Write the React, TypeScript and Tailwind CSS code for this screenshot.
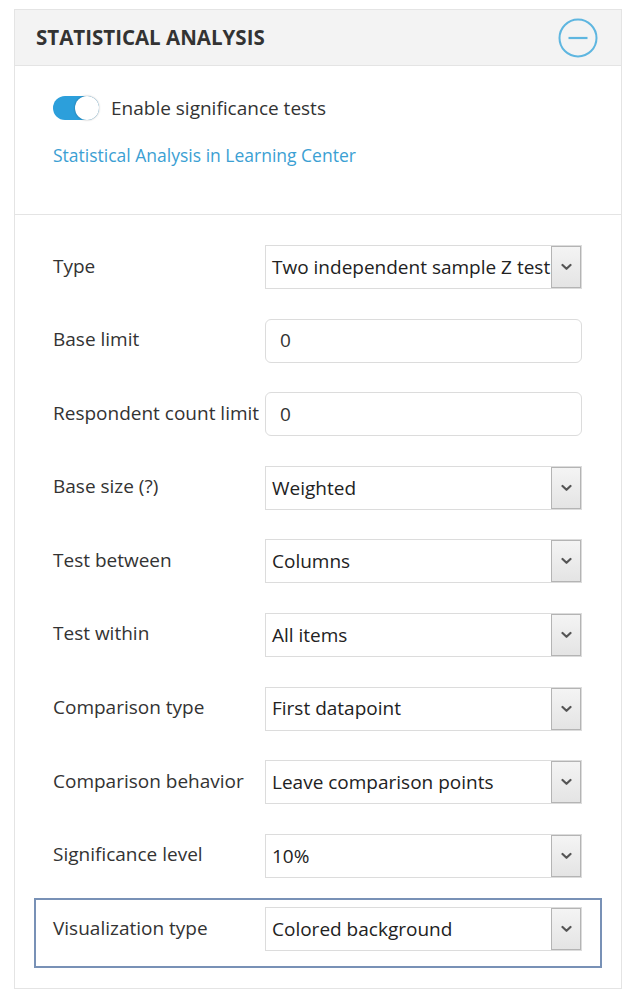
import React, { useState } from 'react';

const font = { fontFamily: '"Open Sans", "Noto Sans", sans-serif' };

const Chevron: React.FC = () => (
  <svg className="h-[8px] w-[11px]" viewBox="0 0 11 8" fill="none">
    <path d="M1.5 2l4 3.8 4-3.8" stroke="#555" strokeWidth={2.2} strokeLinecap="round" strokeLinejoin="round" />
  </svg>
);

const SelectBox: React.FC<{ value: string }> = ({ value }) => (
  <div className="relative flex h-[44px] w-[317px] shrink-0 items-center overflow-hidden border border-[#dcdcdc] bg-white">
    <span className="flex-1 overflow-hidden whitespace-nowrap pl-[6px] text-[19px] text-[#222]">{value}</span>
    <div className="absolute right-0 top-0 flex h-[42px] w-[30px] items-center justify-center border border-[#b4b4b4] bg-gradient-to-b from-[#f4f4f4] to-[#e4e4e4]">
      <Chevron />
    </div>
  </div>
);

const InputBox: React.FC<{ value: string }> = ({ value }) => (
  <div className="flex h-[44px] w-[317px] shrink-0 items-center rounded-[6px] border border-[#dcdcdc] bg-white pl-[14px] text-[19px] text-[#333]">
    {value}
  </div>
);

type Row = { label: string; value: string; kind: 'select' | 'input' };

const rows: Row[] = [
  { label: 'Type', value: 'Two independent sample Z test', kind: 'select' },
  { label: 'Base limit', value: '0', kind: 'input' },
  { label: 'Respondent count limit', value: '0', kind: 'input' },
  { label: 'Base size (?)', value: 'Weighted', kind: 'select' },
  { label: 'Test between', value: 'Columns', kind: 'select' },
  { label: 'Test within', value: 'All items', kind: 'select' },
  { label: 'Comparison type', value: 'First datapoint', kind: 'select' },
  { label: 'Comparison behavior', value: 'Leave comparison points', kind: 'select' },
  { label: 'Significance level', value: '10%', kind: 'select' },
];

const FieldRow: React.FC<{ row: Row }> = ({ row }) => (
  <div className="flex h-[44px] items-center">
    <div className="w-[212px] shrink-0 whitespace-nowrap pb-[2px] text-[19px] leading-none text-[#333]">{row.label}</div>
    {row.kind === 'select' ? <SelectBox value={row.value} /> : <InputBox value={row.value} />}
  </div>
);

const App: React.FC = () => {
  const [enabled, setEnabled] = useState(true);

  return (
    <div className="min-h-[1000px] bg-white pl-[14px] pt-[9px]" style={font}>
      <div className="w-[608px] border border-[#e4e4e4] bg-white">
        <div className="flex h-[56px] items-center justify-between border-b border-[#e4e4e4] bg-[#f3f3f3] pl-[21px] pr-[23px]">
          <h2 className="text-[20.5px] font-bold text-[#333]">STATISTICAL ANALYSIS</h2>
          <button className="flex h-[40px] w-[40px] items-center justify-center">
            <svg className="h-[40px] w-[40px]" viewBox="0 0 40 40" fill="none">
              <circle cx="20" cy="20" r="18.5" stroke="#5eb6e0" strokeWidth={2} />
              <path d="M10.5 20h19" stroke="#5eb6e0" strokeWidth={2.2} />
            </svg>
          </button>
        </div>

        <div className="h-[149px] border-b border-[#e4e4e4] px-[38px] pt-[28px]">
          <label className="flex items-center gap-[12px]">
            <button
              onClick={() => setEnabled(!enabled)}
              className={`relative h-[24px] w-[46px] rounded-full ${enabled ? 'bg-[#2c9fdb]' : 'bg-[#ccc]'}`}
            >
              <span
                className={`absolute top-0 h-[24px] w-[24px] rounded-full bg-white shadow-[0_0_2px_rgba(0,0,0,0.35)] ${enabled ? 'right-0' : 'left-0'}`}
              />
            </button>
            <span className="text-[19px] text-[#333]">Enable significance tests</span>
          </label>
          <a href="#" className="mt-[19px] block text-[17.5px] text-[#3ba0d3]">
            Statistical Analysis in Learning Center
          </a>
        </div>

        <div className="flex flex-col gap-[29.6px] px-[38px] pb-[20px] pt-[30px]">
          {rows.map((r) => (
            <FieldRow key={r.label} row={r} />
          ))}
          <div className="mx-[-19px] mt-[-9px] border-2 border-[#7891b6] px-[17px] pb-[15px] pt-[7px]">
            <FieldRow row={{ label: 'Visualization type', value: 'Colored background', kind: 'select' }} />
          </div>
        </div>
      </div>
    </div>
  );
};

export default App;
